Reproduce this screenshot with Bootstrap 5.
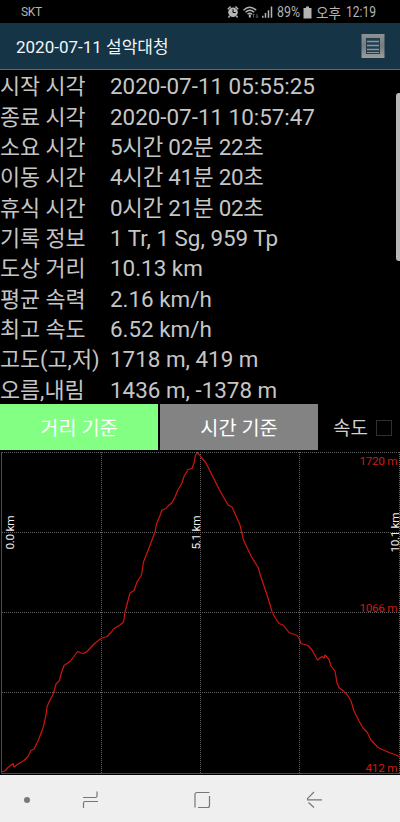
<!DOCTYPE html>
<html lang="ko">
<head>
<meta charset="utf-8">
<meta name="viewport" content="width=device-width, initial-scale=1">
<title>2020-07-11 설악대청</title>
<link href="https://cdn.jsdelivr.net/npm/bootstrap@5.3.0/dist/css/bootstrap.min.css" rel="stylesheet">
<style>
body{font-family:Roboto,"Noto Sans CJK KR",sans-serif;background:#000;color:#c6c6c6;width:400px;height:822px;overflow:hidden}
.status-bar{height:23px;line-height:23px;color:#b4b4b4;padding:1px 18px 0 21px}
.carrier{font-size:12px;letter-spacing:-.3px}
.app-bar{height:47px;background:#153446;border-bottom:1px solid #2280a5;padding:0 15px 0 16px}
.app-title{font-size:17px;line-height:46px;padding-top:2px;color:#f2f5f6}
.info{height:334px;padding-top:1.4px}
.info-row{height:30.35px;line-height:30.35px;font-size:22.4px;white-space:nowrap}
.info-label{width:110px;font-size:21.8px;padding-top:1px}
.info-time{letter-spacing:-.25px}
.scroll-thumb{right:0;top:23px;width:4px;height:168px;background:#b9b9b9;border-radius:3px 0 0 3px}
.mode-row{height:47px;gap:2px}
.mode-btn{width:158px;height:46px;border:0;border-radius:0;font-size:19.7px;line-height:46px;padding:2px 0 0;color:#fff}
.mode-on{background:#83ff83}
.mode-off{background:#838383}
.speed{font-size:19px;line-height:46px;padding-left:13px;color:#d0d0d0}
.speed-text{padding-top:2px}
.speed-box{width:16px;height:16px;border:1px solid #303030;margin-left:8px}
.sys-nav{height:47px;background:#efefef}
svg{display:block;flex:none}
svg text{font-family:Roboto,"Noto Sans CJK KR",sans-serif}
</style>
</head>
<body class="d-flex flex-column">
<header>
  <div class="status-bar d-flex align-items-center justify-content-between">
    <span class="carrier">SKT</span>
    <div class="d-flex align-items-center">
      <svg width="46" height="14" viewBox="0 0 46 14">
        <g fill="none" stroke="#b4b4b4">
          <circle cx="6" cy="7.300" r="4.800" fill="#b4b4b4" stroke="none"/>
          <path d="M.8 4.200L3.600 1.500M11.200 4.200L8.400 1.500M2.500 11l-1 1.500M9.500 11l1 1.500" stroke-width="1.500"/>
          <path d="M6 4.300v3.200h2.700" stroke="#000"/>
          <path d="M16.500 5.200q6.200-5.800 12.700 0M18.500 7.300q4.300-4 8.700 0M20.500 9.300q2.300-2 4.500 0" stroke-width="1.400"/>
          <path d="M22.800 9.500v3" stroke-width="2"/>
          <path d="M26.500 9v3.500M30 9v3.500M25.500 10l1-1 1 1M29 11.500l1 1 1-1" stroke="#777" stroke-width=".8"/>
          <path d="M35.800 12.700v-2M38.500 12.700V8M41.500 12.700V5.200M44.500 12.700V1.500" stroke-width="1.500"/>
        </g>
      </svg>
      <svg width="30" height="20"><text x="4" y="15" font-size="14" textLength="23" lengthAdjust="spacingAndGlyphs" fill="#b4b4b4">89%</text></svg>
      <svg width="9" height="13"><path d="M.5 2H3V.5h3V2h2.500v10.500H.5z" fill="#b4b4b4"/></svg>
      <svg width="70" height="20"><g font-size="14" fill="#b4b4b4"><text x="4" y="15.500" textLength="25" lengthAdjust="spacingAndGlyphs">오후</text><text x="34" y="15" textLength="30" lengthAdjust="spacingAndGlyphs">12:19</text></g></svg>
    </div>
  </div>
  <nav class="app-bar d-flex align-items-center justify-content-between">
    <span class="app-title">2020-07-11 설악대청</span>
    <svg width="24" height="26" viewBox="0 0 24 26">
      <defs><linearGradient id="steel" x2="0" y2="1"><stop stop-color="#8d9294"/><stop offset=".5" stop-color="#777c7e"/><stop offset="1" stop-color="#9b9e9f"/></linearGradient></defs>
      <path d="M.5 1h23v24H.5z" fill="url(#steel)"/>
      <path d="M5 5h14v16H5z" fill="#233e4c"/>
      <path d="M6 8.500h12M6 12.500h12M6 16.500h12" stroke="#87979f" stroke-width="1.300"/>
      <path d="M6 19.500h12" stroke="#87979f"/>
    </svg>
  </nav>
</header>
<main>
  <section class="info position-relative">
    <div class="info-row d-flex"><span class="info-label">시작 시각</span><span>2020-07-11 05:55:25</span></div>
    <div class="info-row d-flex"><span class="info-label">종료 시각</span><span>2020-07-11 10:57:47</span></div>
    <div class="info-row d-flex"><span class="info-label">소요 시간</span><span class="info-time">5시간 02분 22초</span></div>
    <div class="info-row d-flex"><span class="info-label">이동 시간</span><span class="info-time">4시간 41분 20초</span></div>
    <div class="info-row d-flex"><span class="info-label">휴식 시간</span><span class="info-time">0시간 21분 02초</span></div>
    <div class="info-row d-flex"><span class="info-label">기록 정보</span><span>1 Tr, 1 Sg, 959 Tp</span></div>
    <div class="info-row d-flex"><span class="info-label">도상 거리</span><span>10.13 km</span></div>
    <div class="info-row d-flex"><span class="info-label">평균 속력</span><span>2.16 km/h</span></div>
    <div class="info-row d-flex"><span class="info-label">최고 속도</span><span>6.52 km/h</span></div>
    <div class="info-row d-flex"><span class="info-label">고도(고,저)</span><span>1718 m, 419 m</span></div>
    <div class="info-row d-flex"><span class="info-label">오름,내림</span><span>1436 m, -1378 m</span></div>
    <div class="scroll-thumb position-absolute"></div>
  </section>
  <section class="mode-row d-flex">
    <button class="btn mode-btn mode-on">거리 기준</button>
    <button class="btn mode-btn mode-off">시간 기준</button>
    <label class="speed d-flex align-items-center"><span class="speed-text">속도</span><span class="speed-box"></span></label>
  </section>
  <svg width="400" height="324" viewBox="0 451 400 324">
    <g fill="none" stroke="#636363" stroke-dasharray="1 1">
      <path d="M2 452.500H400M2 532.500H400M2 612.500H400M2 692.500H400"/>
      <path d="M101.500 452V773M200.500 452V773M299.500 452V773M399.500 452V773"/>
    </g>
    <path d="M1.500 452V773.500H400" fill="none" stroke="#4b4b4b"/>
    <path fill="none" stroke="#d0150f" stroke-width="1.200" stroke-linejoin="round" d="M2 771.500L5 771 8 767.500 13 763.500 14 767 18 764 24 760.500 28 756.500 31 750.500 34 749 38 741 43 728 46 715 47 707 49 702 53 694.500 56 684 59.500 680.500 61 674 64 665.500 70 661.500 73.500 657 77.500 651.500 81 653 84 653.500 88 650.500 94 644 101 638.500 107 636.500 111 632.500 114 628.500 120 625 123.500 622 125 612 130 593 134 590.500 137 582 141.500 575 143.500 562 149 548 155 532 156.500 524 160 515.500 162 510 166 508.500 168 506 172 502.500 175 497 178 489.500 181.500 484 184 476.500 188 469.500 192 468.500 194 463 195.500 455 197.500 452.500 201 457 206 463 212 475 219 489 228 505 232 507 240 525 243.500 540 251 556 258.500 568 260 574 268 598 272 611.500 275 617.500 279 623.500 283 625 289 632.500 297 635.500 299 638 301 643.500 308 645.500 312 650 317.500 660 322 656.500 324 658 325 655 329 659.500 331 666 335 671 337 683 339 687.500 344 691.500 347 694.500 351 701 354 711 359 721 363 728 367 732 371 740 378 747.500 389 752.500 396 755 400 757"/>
    <g fill="#cb1b15" font-size="11.800" text-anchor="end">
      <text x="397.500" y="465" textLength="38">1720 m</text>
      <text x="397.500" y="612" textLength="38">1066 m</text>
      <text x="397.500" y="772" textLength="32">412 m</text>
    </g>
    <g fill="#efefef" font-size="11.800" text-anchor="middle">
      <text transform="translate(13.500 532.500) rotate(-90)" textLength="34">0.0 km</text>
      <text transform="translate(200 532.500) rotate(-90)" textLength="34">5.1 km</text>
      <text transform="translate(398.500 532.500) rotate(-90)" textLength="40">10.1 km</text>
    </g>
  </svg>
</main>
<footer class="sys-nav">
  <svg width="400" height="47" viewBox="0 775 400 47">
    <circle cx="27" cy="800" r="3" fill="#777"/>
    <g fill="none" stroke="#777" stroke-width="1.200">
      <path d="M83 797.500H95.500Q97 797.500 97 796V791.500M98 801.500H85Q83.500 801.500 83.500 803V808"/>
      <path d="M195 807.500V794.500Q195 792.500 197 792.500H209.500M209.500 796V805.500Q209.500 807.500 207.500 807.500H198"/>
      <path d="M322 799.800H307M314 792L307 799.200M308.500 802.500L314 807.500"/>
    </g>
  </svg>
</footer>
<script src="https://cdn.jsdelivr.net/npm/bootstrap@5.3.0/dist/js/bootstrap.bundle.min.js"></script>
</body>
</html>
